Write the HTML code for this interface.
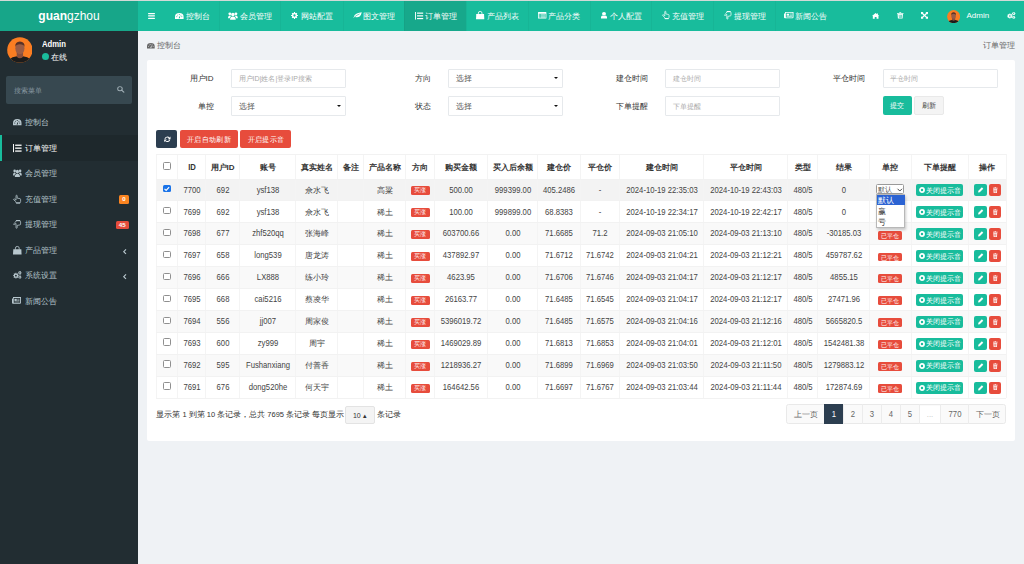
<!DOCTYPE html><html><head><meta charset="utf-8"><style>
*{box-sizing:border-box;margin:0;padding:0}
html,body{width:1024px;height:564px;overflow:hidden}
body{position:relative;background:#eff2f5;font-family:"Liberation Sans",sans-serif;font-size:8px;color:#333}
.a{position:absolute;white-space:nowrap}
.t{position:absolute;white-space:nowrap;line-height:12px;height:12px}
.ic{position:absolute;display:block;overflow:visible}
.cell{position:absolute;text-align:center;white-space:nowrap}
.vline{position:absolute;width:1px;background:#f4f4f4}
.hline{position:absolute;height:1px;background:#f2f2f2}
.inp{position:absolute;background:#fff;border:1px solid #e6e9ec;height:19.4px;width:115px;border-radius:1px}
.btn{position:absolute;color:#fff;text-align:center;border-radius:2px;white-space:nowrap}
.bdg{position:absolute;color:#fff;text-align:center;border-radius:1.5px;font-size:6px;white-space:nowrap}
</style></head><body>
<div class="a" style="left:0;top:0;width:1024px;height:1px;background:#d2dad7"></div>
<div class="a" style="left:0;top:1px;width:138px;height:30px;background:#17a689"></div>
<div class="t" style="left:-31.00px;width:200px;text-align:center;top:10.00px;font-size:12.00px;color:#fff;font-weight:normal;"><b>guan</b>gzhou</div>
<div class="a" style="left:138px;top:1px;width:886px;height:30px;background:#18bc9c"></div>
<div class="a" style="left:404.2px;top:1px;width:62px;height:30px;background:#17a88b"></div>
<div class="a" style="left:219.0px;top:1px;width:1px;height:30px;background:rgba(0,0,0,0.035)"></div>
<div class="a" style="left:280.0px;top:1px;width:1px;height:30px;background:rgba(0,0,0,0.035)"></div>
<div class="a" style="left:342.7px;top:1px;width:1px;height:30px;background:rgba(0,0,0,0.035)"></div>
<div class="a" style="left:404.2px;top:1px;width:1px;height:30px;background:rgba(0,0,0,0.035)"></div>
<div class="a" style="left:466.1px;top:1px;width:1px;height:30px;background:rgba(0,0,0,0.035)"></div>
<div class="a" style="left:527.8px;top:1px;width:1px;height:30px;background:rgba(0,0,0,0.035)"></div>
<div class="a" style="left:589.7px;top:1px;width:1px;height:30px;background:rgba(0,0,0,0.035)"></div>
<div class="a" style="left:651.4px;top:1px;width:1px;height:30px;background:rgba(0,0,0,0.035)"></div>
<div class="a" style="left:713.2px;top:1px;width:1px;height:30px;background:rgba(0,0,0,0.035)"></div>
<div class="a" style="left:775.0px;top:1px;width:1px;height:30px;background:rgba(0,0,0,0.035)"></div>
<div class="t" style="left:185.80px;top:11.00px;font-size:8.00px;color:#fff;font-weight:normal;">控制台</div>
<div class="t" style="left:239.70px;top:11.00px;font-size:8.00px;color:#fff;font-weight:normal;">会员管理</div>
<div class="t" style="left:301.10px;top:11.00px;font-size:8.00px;color:#fff;font-weight:normal;">网站配置</div>
<div class="t" style="left:363.00px;top:11.00px;font-size:8.00px;color:#fff;font-weight:normal;">图文管理</div>
<div class="t" style="left:425.10px;top:11.00px;font-size:8.00px;color:#fff;font-weight:normal;">订单管理</div>
<div class="t" style="left:486.60px;top:11.00px;font-size:8.00px;color:#fff;font-weight:normal;">产品列表</div>
<div class="t" style="left:548.30px;top:11.00px;font-size:8.00px;color:#fff;font-weight:normal;">产品分类</div>
<div class="t" style="left:610.20px;top:11.00px;font-size:8.00px;color:#fff;font-weight:normal;">个人配置</div>
<div class="t" style="left:672.40px;top:11.00px;font-size:8.00px;color:#fff;font-weight:normal;">充值管理</div>
<div class="t" style="left:734.20px;top:11.00px;font-size:8.00px;color:#fff;font-weight:normal;">提现管理</div>
<div class="t" style="left:795.40px;top:11.00px;font-size:8.00px;color:#fff;font-weight:normal;">新闻公告</div>
<div class="t" style="left:966.50px;top:10.00px;font-size:8.00px;color:#fff;font-weight:normal;">Admin</div>
<svg class="ic" style="left:148.20px;top:12.90px;width:7.00px;height:5.90px" viewBox="0 0 16 13" preserveAspectRatio="none" fill="#fff"><rect x="0" y="0" width="16" height="2.6" rx="1"/><rect x="0" y="5.2" width="16" height="2.6" rx="1"/><rect x="0" y="10.4" width="16" height="2.6" rx="1"/></svg>
<svg class="ic" style="left:174.70px;top:13.10px;width:8.60px;height:5.90px" viewBox="0 0 16 13" preserveAspectRatio="none" fill="#fff"><path fill-rule="evenodd" d="M0 13 L0 8 A8 8 0 0 1 16 8 L16 13 Z M2.2 8.2 a1.1 1.1 0 1 0 2.2 0 a1.1 1.1 0 1 0 -2.2 0 Z M11.6 8.2 a1.1 1.1 0 1 0 2.2 0 a1.1 1.1 0 1 0 -2.2 0 Z M6.9 3.2 a1.1 1.1 0 1 0 2.2 0 a1.1 1.1 0 1 0 -2.2 0 Z M3.8 4.6 a1 1 0 1 0 2 0 a1 1 0 1 0 -2 0 Z M10.2 4.6 a1 1 0 1 0 2 0 a1 1 0 1 0 -2 0 Z M6.6 11.5 L9.8 5 L9.2 11.5 Z"/></svg>
<svg class="ic" style="left:228.20px;top:11.70px;width:9.80px;height:7.70px" viewBox="0 0 18 14" preserveAspectRatio="none" fill="#fff"><circle cx="9" cy="4.6" r="3.2"/><path d="M3.8 14 Q3.8 8.2 9 8.2 Q14.2 8.2 14.2 14 Z"/><circle cx="3.4" cy="3.3" r="2.6"/><circle cx="14.6" cy="3.3" r="2.6"/><path d="M0 11.5 Q0 6.2 3.4 6.2 Q5.2 6.2 6 7.4 Q3.2 9 3.2 11.5 Z"/><path d="M18 11.5 Q18 6.2 14.6 6.2 Q12.8 6.2 12 7.4 Q14.8 9 14.8 11.5 Z"/></svg>
<svg class="ic" style="left:291.30px;top:12.20px;width:7.00px;height:7.00px" viewBox="0 0 16 16" preserveAspectRatio="none" fill="#fff"><path fill-rule="evenodd" d="M13.64 5.95 L13.86 6.71 L15.88 6.62 L15.88 9.38 L13.86 9.29 L13.44 10.53 L13.05 11.23 L14.55 12.60 L12.60 14.55 L11.23 13.05 L10.05 13.64 L9.29 13.86 L9.38 15.88 L6.62 15.88 L6.71 13.86 L5.47 13.44 L4.77 13.05 L3.40 14.55 L1.45 12.60 L2.95 11.23 L2.36 10.05 L2.14 9.29 L0.12 9.38 L0.12 6.62 L2.14 6.71 L2.56 5.47 L2.95 4.77 L1.45 3.40 L3.40 1.45 L4.77 2.95 L5.95 2.36 L6.71 2.14 L6.62 0.12 L9.38 0.12 L9.29 2.14 L10.53 2.56 L11.23 2.95 L12.60 1.45 L14.55 3.40 L13.05 4.77 Z M10.60 8.00 A2.6 2.6 0 1 0 5.40 8.00 A2.6 2.6 0 1 0 10.60 8.00 Z"/></svg>
<svg class="ic" style="left:352.50px;top:12.30px;width:8.80px;height:5.90px" viewBox="0 0 16 12" preserveAspectRatio="none" fill="#fff"><path d="M1 11.5 Q2 5 7 3 Q11 1.5 16 0.5 Q15 6 12 9 Q8 12 3 9.5 Q2 10.5 1.8 12 Z"/><path d="M3 10 Q7 6 12 4" stroke="#18bc9c" stroke-width="1.2" fill="none"/></svg>
<svg class="ic" style="left:414.60px;top:11.80px;width:8.20px;height:7.60px" viewBox="0 0 16 14" preserveAspectRatio="none" fill="#fff"><rect x="0" y="0" width="1.8" height="14"/><rect x="4" y="1" width="12" height="2.2"/><rect x="4" y="6" width="12" height="2.2"/><rect x="4" y="11" width="12" height="2.2"/></svg>
<svg class="ic" style="left:476.00px;top:11.30px;width:8.30px;height:8.20px" viewBox="0 0 16 16" preserveAspectRatio="none" fill="#fff"><path fill-rule="evenodd" d="M0.5 6 L15.5 6 L16 16 L0 16 Z"/><path d="M4.5 7 L4.5 4 Q4.5 0.8 8 0.8 Q11.5 0.8 11.5 4 L11.5 7" stroke-width="1.6" fill="none" stroke="#fff"/></svg>
<svg class="ic" style="left:538.00px;top:12.00px;width:8.40px;height:6.50px" viewBox="0 0 16 13" preserveAspectRatio="none" fill="#fff"><path fill-rule="evenodd" d="M0 1 Q0 0 1 0 L15 0 Q16 0 16 1 L16 12 Q16 13 15 13 L1 13 Q0 13 0 12 Z M1.5 3.5 L14.5 3.5 L14.5 11.5 L1.5 11.5 Z"/><rect x="2.5" y="5" width="2" height="1.5"/><rect x="2.5" y="7.5" width="2" height="1.5"/><rect x="2.5" y="10" width="2" height="1"/><rect x="5.5" y="5" width="8" height="1.5"/><rect x="5.5" y="7.5" width="8" height="1.5"/><rect x="5.5" y="10" width="8" height="1"/></svg>
<svg class="ic" style="left:601.00px;top:12.30px;width:6.00px;height:6.60px" viewBox="0 0 12 16" preserveAspectRatio="none" fill="#fff"><circle cx="6" cy="4.2" r="4"/><path d="M0 16 L0 13 Q0 8.5 3.5 8.5 Q6 10.3 8.5 8.5 Q12 8.5 12 13 L12 16 Z"/></svg>
<svg class="ic" style="left:661.80px;top:11.00px;width:7.40px;height:8.20px" viewBox="0 0 14 16" preserveAspectRatio="none" fill="#fff"><path d="M5.3 1.5 Q5.3 0.5 6.3 0.5 Q7.3 0.5 7.3 1.5 L7.3 5.8 L12.2 6.8 Q13.3 7 13.3 8.2 L13.3 12.4 L12.4 14.6 L5.5 14.6 L4.6 12.2 L1.2 8.8 Q0.6 8 1.4 7.5 Q2.2 7.1 3 7.8 L5.3 9.6 Z" fill="none" stroke-width="1.4" stroke-linejoin="round" stroke="#fff"/><path d="M5.4 15 L12.4 15" stroke-width="1.8" stroke="#fff"/></svg>
<svg class="ic" style="left:723.70px;top:11.20px;width:7.40px;height:8.40px" viewBox="0 0 14 16" preserveAspectRatio="none" fill="#fff"><path d="M5.3 14.5 Q5.3 15.5 6.3 15.5 Q7.3 15.5 7.3 14.5 L7.3 10.2 L12.2 9.2 Q13.3 9 13.3 7.8 L13.3 3.6 L12.4 1.4 L5.5 1.4 L4.6 3.8 L1.2 7.2 Q0.6 8 1.4 8.5 Q2.2 8.9 3 8.2 L5.3 6.4 Z" fill="none" stroke-width="1.4" stroke-linejoin="round" stroke="#fff"/><path d="M5.4 1 L12.4 1" stroke-width="1.8" stroke="#fff"/></svg>
<svg class="ic" style="left:784.40px;top:12.20px;width:9.50px;height:6.30px" viewBox="0 0 18 13" preserveAspectRatio="none" fill="#fff"><path fill-rule="evenodd" d="M2 0 L18 0 L18 11 Q18 13 16 13 L2 13 Q0 13 0 11 L0 3 L2 3 Z M3.5 1.8 L16.2 1.8 L16.2 11.2 L3.5 11.2 Z"/><rect x="5" y="3.5" width="4.5" height="4"/><rect x="10.5" y="3.5" width="4.5" height="1.2"/><rect x="10.5" y="6" width="4.5" height="1.2"/><rect x="5" y="8.8" width="10" height="1.2"/></svg>
<svg class="ic" style="left:871.50px;top:12.50px;width:7.30px;height:5.80px" viewBox="0 0 16 13" preserveAspectRatio="none" fill="#fff"><path d="M8 0 L16 6.5 L14.2 6.5 L14.2 13 L10 13 L10 9 L6 9 L6 13 L1.8 13 L1.8 6.5 L0 6.5 Z"/><rect x="11.2" y="1" width="2" height="4"/></svg>
<svg class="ic" style="left:897.00px;top:12.40px;width:6.50px;height:6.60px" viewBox="0 0 12 16" preserveAspectRatio="none" fill="#fff"><path fill-rule="evenodd" d="M0 2.2 L4 2.2 L4.5 0.5 L7.5 0.5 L8 2.2 L12 2.2 L12 4 L0 4 Z M1 5 L11 5 L10.3 16 L1.7 16 Z M3.2 6.5 L3.7 14.5 L4.7 14.5 L4.4 6.5 Z M5.5 6.5 L5.5 14.5 L6.5 14.5 L6.5 6.5 Z M7.6 6.5 L7.3 14.5 L8.3 14.5 L8.8 6.5 Z"/></svg>
<svg class="ic" style="left:921.00px;top:12.20px;width:7.00px;height:6.80px" viewBox="0 0 16 16" preserveAspectRatio="none" fill="#fff"><path d="M0 0 L6 0 L4 2 L8 6 L12 2 L10 0 L16 0 L16 6 L14 4 L10 8 L14 12 L16 10 L16 16 L10 16 L12 14 L8 10 L4 14 L6 16 L0 16 L0 10 L2 12 L6 8 L2 4 L0 6 Z"/></svg>
<svg class="ic" style="left:1007.00px;top:12.20px;width:8.60px;height:6.80px" viewBox="0 0 18 16" preserveAspectRatio="none" fill="#fff"><path fill-rule="evenodd" d="M10.13 7.99 L10.30 8.56 L11.91 8.47 L11.91 10.53 L10.30 10.44 L9.99 11.36 L9.71 11.87 L10.91 12.95 L9.45 14.41 L8.37 13.21 L7.51 13.63 L6.94 13.80 L7.03 15.41 L4.97 15.41 L5.06 13.80 L4.14 13.49 L3.63 13.21 L2.55 14.41 L1.09 12.95 L2.29 11.87 L1.87 11.01 L1.70 10.44 L0.09 10.53 L0.09 8.47 L1.70 8.56 L2.01 7.64 L2.29 7.13 L1.09 6.05 L2.55 4.59 L3.63 5.79 L4.49 5.37 L5.06 5.20 L4.97 3.59 L7.03 3.59 L6.94 5.20 L7.86 5.51 L8.37 5.79 L9.45 4.59 L10.91 6.05 L9.71 7.13 Z M7.90 9.50 A1.9 1.9 0 1 0 4.10 9.50 A1.9 1.9 0 1 0 7.90 9.50 Z"/><path fill-rule="evenodd" d="M16.50 2.54 L16.68 3.00 L17.70 2.93 L17.70 4.67 L16.68 4.60 L16.34 5.34 L16.03 5.73 L16.60 6.57 L15.10 7.44 L14.65 6.52 L13.84 6.60 L13.35 6.52 L12.90 7.44 L11.40 6.57 L11.97 5.73 L11.50 5.06 L11.32 4.60 L10.30 4.67 L10.30 2.93 L11.32 3.00 L11.66 2.26 L11.97 1.87 L11.40 1.03 L12.90 0.16 L13.35 1.08 L14.16 1.00 L14.65 1.08 L15.10 0.16 L16.60 1.03 L16.03 1.87 Z M15.20 3.80 A1.2 1.2 0 1 0 12.80 3.80 A1.2 1.2 0 1 0 15.20 3.80 Z"/><path fill-rule="evenodd" d="M16.32 11.33 L16.49 11.76 L17.41 11.70 L17.41 13.30 L16.49 13.24 L16.17 13.93 L15.89 14.29 L16.40 15.05 L15.01 15.85 L14.61 15.03 L13.85 15.10 L13.39 15.03 L12.99 15.85 L11.60 15.05 L12.11 14.29 L11.68 13.67 L11.51 13.24 L10.59 13.30 L10.59 11.70 L11.51 11.76 L11.83 11.07 L12.11 10.71 L11.60 9.95 L12.99 9.15 L13.39 9.97 L14.15 9.90 L14.61 9.97 L15.01 9.15 L16.40 9.95 L15.89 10.71 Z M15.10 12.50 A1.1 1.1 0 1 0 12.90 12.50 A1.1 1.1 0 1 0 15.10 12.50 Z"/></svg>
<div class="a" style="left:946.60px;top:9.90px;width:13.2px;height:13.2px"><svg style="width:13.2px;height:13.2px;display:block" viewBox="0 0 26 26"><defs><clipPath id="av2"><circle cx="13" cy="13" r="12.8"/></clipPath></defs><circle cx="13" cy="13" r="12.8" fill="#fb7d22"/><g clip-path="url(#av2)"><path d="M1 27 L2.5 22.5 Q5 20 10 19.5 L16 19.5 Q21 20 23.5 22.5 L25 27 Z" fill="#1c1c1c"/><path d="M9.8 14 L16.2 14 L16.2 19.8 Q13 23 9.8 19.8 Z" fill="#8a4f3c"/><ellipse cx="13" cy="11.4" rx="4.6" ry="6" fill="#9b5c46"/><path d="M8.3 10 Q8 4.8 13 4.6 Q18 4.8 17.7 10 Q17 7.5 13 7.3 Q9 7.5 8.3 10 Z" fill="#5a3126"/></g></svg></div>
<div class="a" style="left:0;top:31px;width:138px;height:533px;background:#222d32"></div>
<div class="a" style="left:6px;top:75.8px;width:126.2px;height:28px;background:#374850;border-radius:2px"></div>
<div class="t" style="left:13.80px;top:84.60px;font-size:7.00px;color:#8797a0;font-weight:normal;">搜索菜单</div>
<div class="t" style="left:42.00px;top:37.60px;font-size:9.28px;color:#fff;font-weight:bold;transform:scaleX(0.83);transform-origin:left center;">Admin</div>
<div class="a" style="left:42px;top:53.4px;width:7px;height:7px;border-radius:50%;background:#1abc9c"></div>
<div class="t" style="left:50.60px;top:52.00px;font-size:8.00px;color:#fff;font-weight:normal;">在线</div>
<div class="a" style="left:0;top:135px;width:138px;height:25.8px;background:#1e282c"></div>
<div class="a" style="left:0;top:135px;width:2px;height:25.8px;background:#18bc9c"></div>
<div class="t" style="left:25.00px;top:117.20px;font-size:8.00px;color:#b8c7ce;font-weight:normal;">控制台</div>
<div class="t" style="left:25.00px;top:142.70px;font-size:8.00px;color:#fff;font-weight:normal;">订单管理</div>
<div class="t" style="left:25.00px;top:168.20px;font-size:8.00px;color:#b8c7ce;font-weight:normal;">会员管理</div>
<div class="t" style="left:25.00px;top:193.90px;font-size:8.00px;color:#b8c7ce;font-weight:normal;">充值管理</div>
<div class="t" style="left:25.00px;top:219.40px;font-size:8.00px;color:#b8c7ce;font-weight:normal;">提现管理</div>
<div class="t" style="left:25.00px;top:245.20px;font-size:8.00px;color:#b8c7ce;font-weight:normal;">产品管理</div>
<div class="t" style="left:25.00px;top:270.30px;font-size:8.00px;color:#b8c7ce;font-weight:normal;">系统设置</div>
<div class="t" style="left:25.00px;top:295.90px;font-size:8.00px;color:#b8c7ce;font-weight:normal;">新闻公告</div>
<div class="bdg" style="left:118.9px;top:195px;width:10.1px;height:8.8px;line-height:8.4px;background:#fb8421;font-weight:bold;font-size:6.2px">0</div>
<div class="bdg" style="left:115.6px;top:220.5px;width:13.4px;height:8.8px;line-height:8.4px;background:#e74c3c;font-weight:bold;font-size:6.2px">45</div>
<div class="a" style="left:6.60px;top:36.90px;width:25.8px;height:25.8px"><svg style="width:25.8px;height:25.8px;display:block" viewBox="0 0 26 26"><defs><clipPath id="av1"><circle cx="13" cy="13" r="12.8"/></clipPath></defs><circle cx="13" cy="13" r="12.8" fill="#fb7d22"/><g clip-path="url(#av1)"><path d="M1 27 L2.5 22.5 Q5 20 10 19.5 L16 19.5 Q21 20 23.5 22.5 L25 27 Z" fill="#1c1c1c"/><path d="M9.8 14 L16.2 14 L16.2 19.8 Q13 23 9.8 19.8 Z" fill="#8a4f3c"/><ellipse cx="13" cy="11.4" rx="4.6" ry="6" fill="#9b5c46"/><path d="M8.3 10 Q8 4.8 13 4.6 Q18 4.8 17.7 10 Q17 7.5 13 7.3 Q9 7.5 8.3 10 Z" fill="#5a3126"/></g></svg></div>
<svg class="ic" style="left:117.00px;top:86.30px;width:7.30px;height:6.60px" viewBox="0 0 16 16" preserveAspectRatio="none" fill="#a0aeb5"><circle cx="6.5" cy="6.5" r="5" fill="none" stroke-width="2.2" stroke="#a0aeb5"/><path d="M10 10 L15 15" stroke-width="2.6" stroke-linecap="round" stroke="#a0aeb5"/></svg>
<svg class="ic" style="left:12.50px;top:119.30px;width:8.50px;height:6.30px" viewBox="0 0 16 13" preserveAspectRatio="none" fill="#b8c7ce"><path fill-rule="evenodd" d="M0 13 L0 8 A8 8 0 0 1 16 8 L16 13 Z M2.2 8.2 a1.1 1.1 0 1 0 2.2 0 a1.1 1.1 0 1 0 -2.2 0 Z M11.6 8.2 a1.1 1.1 0 1 0 2.2 0 a1.1 1.1 0 1 0 -2.2 0 Z M6.9 3.2 a1.1 1.1 0 1 0 2.2 0 a1.1 1.1 0 1 0 -2.2 0 Z M3.8 4.6 a1 1 0 1 0 2 0 a1 1 0 1 0 -2 0 Z M10.2 4.6 a1 1 0 1 0 2 0 a1 1 0 1 0 -2 0 Z M6.6 11.5 L9.8 5 L9.2 11.5 Z"/></svg>
<svg class="ic" style="left:12.70px;top:143.60px;width:8.60px;height:8.20px" viewBox="0 0 16 14" preserveAspectRatio="none" fill="#fff"><rect x="0" y="0" width="1.8" height="14"/><rect x="4" y="1" width="12" height="2.2"/><rect x="4" y="6" width="12" height="2.2"/><rect x="4" y="11" width="12" height="2.2"/></svg>
<svg class="ic" style="left:12.50px;top:169.20px;width:8.80px;height:8.00px" viewBox="0 0 18 14" preserveAspectRatio="none" fill="#b8c7ce"><circle cx="9" cy="4.6" r="3.2"/><path d="M3.8 14 Q3.8 8.2 9 8.2 Q14.2 8.2 14.2 14 Z"/><circle cx="3.4" cy="3.3" r="2.6"/><circle cx="14.6" cy="3.3" r="2.6"/><path d="M0 11.5 Q0 6.2 3.4 6.2 Q5.2 6.2 6 7.4 Q3.2 9 3.2 11.5 Z"/><path d="M18 11.5 Q18 6.2 14.6 6.2 Q12.8 6.2 12 7.4 Q14.8 9 14.8 11.5 Z"/></svg>
<svg class="ic" style="left:13.00px;top:194.60px;width:8.00px;height:8.60px" viewBox="0 0 14 16" preserveAspectRatio="none" fill="#b8c7ce"><path d="M5.3 1.5 Q5.3 0.5 6.3 0.5 Q7.3 0.5 7.3 1.5 L7.3 5.8 L12.2 6.8 Q13.3 7 13.3 8.2 L13.3 12.4 L12.4 14.6 L5.5 14.6 L4.6 12.2 L1.2 8.8 Q0.6 8 1.4 7.5 Q2.2 7.1 3 7.8 L5.3 9.6 Z" fill="none" stroke-width="1.4" stroke-linejoin="round" stroke="#b8c7ce"/><path d="M5.4 15 L12.4 15" stroke-width="1.8" stroke="#b8c7ce"/></svg>
<svg class="ic" style="left:13.00px;top:219.80px;width:8.00px;height:8.50px" viewBox="0 0 14 16" preserveAspectRatio="none" fill="#b8c7ce"><path d="M5.3 14.5 Q5.3 15.5 6.3 15.5 Q7.3 15.5 7.3 14.5 L7.3 10.2 L12.2 9.2 Q13.3 9 13.3 7.8 L13.3 3.6 L12.4 1.4 L5.5 1.4 L4.6 3.8 L1.2 7.2 Q0.6 8 1.4 8.5 Q2.2 8.9 3 8.2 L5.3 6.4 Z" fill="none" stroke-width="1.4" stroke-linejoin="round" stroke="#b8c7ce"/><path d="M5.4 1 L12.4 1" stroke-width="1.8" stroke="#b8c7ce"/></svg>
<svg class="ic" style="left:12.60px;top:245.50px;width:8.60px;height:8.50px" viewBox="0 0 16 16" preserveAspectRatio="none" fill="#b8c7ce"><path fill-rule="evenodd" d="M0.5 6 L15.5 6 L16 16 L0 16 Z"/><path d="M4.5 7 L4.5 4 Q4.5 0.8 8 0.8 Q11.5 0.8 11.5 4 L11.5 7" stroke-width="1.6" fill="none" stroke="#b8c7ce"/></svg>
<svg class="ic" style="left:12.50px;top:271.30px;width:8.80px;height:7.80px" viewBox="0 0 18 16" preserveAspectRatio="none" fill="#b8c7ce"><path fill-rule="evenodd" d="M10.13 7.99 L10.30 8.56 L11.91 8.47 L11.91 10.53 L10.30 10.44 L9.99 11.36 L9.71 11.87 L10.91 12.95 L9.45 14.41 L8.37 13.21 L7.51 13.63 L6.94 13.80 L7.03 15.41 L4.97 15.41 L5.06 13.80 L4.14 13.49 L3.63 13.21 L2.55 14.41 L1.09 12.95 L2.29 11.87 L1.87 11.01 L1.70 10.44 L0.09 10.53 L0.09 8.47 L1.70 8.56 L2.01 7.64 L2.29 7.13 L1.09 6.05 L2.55 4.59 L3.63 5.79 L4.49 5.37 L5.06 5.20 L4.97 3.59 L7.03 3.59 L6.94 5.20 L7.86 5.51 L8.37 5.79 L9.45 4.59 L10.91 6.05 L9.71 7.13 Z M7.90 9.50 A1.9 1.9 0 1 0 4.10 9.50 A1.9 1.9 0 1 0 7.90 9.50 Z"/><path fill-rule="evenodd" d="M16.50 2.54 L16.68 3.00 L17.70 2.93 L17.70 4.67 L16.68 4.60 L16.34 5.34 L16.03 5.73 L16.60 6.57 L15.10 7.44 L14.65 6.52 L13.84 6.60 L13.35 6.52 L12.90 7.44 L11.40 6.57 L11.97 5.73 L11.50 5.06 L11.32 4.60 L10.30 4.67 L10.30 2.93 L11.32 3.00 L11.66 2.26 L11.97 1.87 L11.40 1.03 L12.90 0.16 L13.35 1.08 L14.16 1.00 L14.65 1.08 L15.10 0.16 L16.60 1.03 L16.03 1.87 Z M15.20 3.80 A1.2 1.2 0 1 0 12.80 3.80 A1.2 1.2 0 1 0 15.20 3.80 Z"/><path fill-rule="evenodd" d="M16.32 11.33 L16.49 11.76 L17.41 11.70 L17.41 13.30 L16.49 13.24 L16.17 13.93 L15.89 14.29 L16.40 15.05 L15.01 15.85 L14.61 15.03 L13.85 15.10 L13.39 15.03 L12.99 15.85 L11.60 15.05 L12.11 14.29 L11.68 13.67 L11.51 13.24 L10.59 13.30 L10.59 11.70 L11.51 11.76 L11.83 11.07 L12.11 10.71 L11.60 9.95 L12.99 9.15 L13.39 9.97 L14.15 9.90 L14.61 9.97 L15.01 9.15 L16.40 9.95 L15.89 10.71 Z M15.10 12.50 A1.1 1.1 0 1 0 12.90 12.50 A1.1 1.1 0 1 0 15.10 12.50 Z"/></svg>
<svg class="ic" style="left:12.20px;top:297.30px;width:9.00px;height:6.80px" viewBox="0 0 18 13" preserveAspectRatio="none" fill="#b8c7ce"><path fill-rule="evenodd" d="M2 0 L18 0 L18 11 Q18 13 16 13 L2 13 Q0 13 0 11 L0 3 L2 3 Z M3.5 1.8 L16.2 1.8 L16.2 11.2 L3.5 11.2 Z"/><rect x="5" y="3.5" width="4.5" height="4"/><rect x="10.5" y="3.5" width="4.5" height="1.2"/><rect x="10.5" y="6" width="4.5" height="1.2"/><rect x="5" y="8.8" width="10" height="1.2"/></svg>
<svg class="ic" style="left:122.70px;top:249.20px;width:3.60px;height:5.40px" viewBox="0 0 6 10" preserveAspectRatio="none" fill="#b8c7ce"><path d="M5 0.8 L1.2 5 L5 9.2" fill="none" stroke-width="1.9" stroke="#b8c7ce"/></svg>
<svg class="ic" style="left:122.70px;top:274.30px;width:3.60px;height:5.40px" viewBox="0 0 6 10" preserveAspectRatio="none" fill="#b8c7ce"><path d="M5 0.8 L1.2 5 L5 9.2" fill="none" stroke-width="1.9" stroke="#b8c7ce"/></svg>
<svg class="ic" style="left:146.90px;top:42.90px;width:7.70px;height:5.40px" viewBox="0 0 16 13" preserveAspectRatio="none" fill="#666"><path fill-rule="evenodd" d="M0 13 L0 8 A8 8 0 0 1 16 8 L16 13 Z M2.2 8.2 a1.1 1.1 0 1 0 2.2 0 a1.1 1.1 0 1 0 -2.2 0 Z M11.6 8.2 a1.1 1.1 0 1 0 2.2 0 a1.1 1.1 0 1 0 -2.2 0 Z M6.9 3.2 a1.1 1.1 0 1 0 2.2 0 a1.1 1.1 0 1 0 -2.2 0 Z M3.8 4.6 a1 1 0 1 0 2 0 a1 1 0 1 0 -2 0 Z M10.2 4.6 a1 1 0 1 0 2 0 a1 1 0 1 0 -2 0 Z M6.6 11.5 L9.8 5 L9.2 11.5 Z"/></svg>
<div class="t" style="left:157.20px;top:40.30px;font-size:8.00px;color:#666;font-weight:normal;">控制台</div>
<div class="t" style="right:9.00px;top:40.30px;font-size:8.00px;color:#666;font-weight:normal;">订单管理</div>
<div class="a" style="left:147px;top:60px;width:868px;height:381px;background:#fff;border-radius:2px"></div>
<div class="t" style="right:810.50px;top:73.40px;font-size:8.00px;color:#333;font-weight:normal;">用户ID</div>
<div class="t" style="right:810.50px;top:100.50px;font-size:8.00px;color:#333;font-weight:normal;">单控</div>
<div class="t" style="right:593.50px;top:73.40px;font-size:8.00px;color:#333;font-weight:normal;">方向</div>
<div class="t" style="right:593.50px;top:100.50px;font-size:8.00px;color:#333;font-weight:normal;">状态</div>
<div class="t" style="right:376.00px;top:73.40px;font-size:8.00px;color:#333;font-weight:normal;">建仓时间</div>
<div class="t" style="right:376.00px;top:100.50px;font-size:8.00px;color:#333;font-weight:normal;">下单提醒</div>
<div class="t" style="right:159.00px;top:73.40px;font-size:8.00px;color:#333;font-weight:normal;">平仓时间</div>
<div class="inp" style="left:231.1px;top:68.5px"></div>
<div class="t" style="left:238.60px;top:73.00px;font-size:7.00px;color:#aaa;font-weight:normal;">用户ID|姓名|登录IP搜索</div>
<div class="inp" style="left:231.1px;top:96.3px"></div>
<div class="t" style="left:239.10px;top:100.60px;font-size:8.00px;color:#555;font-weight:normal;">选择</div>
<div class="a" style="left:336.7px;top:104.6px;width:0;height:0;border-left:2.3px solid transparent;border-right:2.3px solid transparent;border-top:2.7px solid #111"></div>
<div class="inp" style="left:448px;top:68.5px"></div>
<div class="t" style="left:456.00px;top:72.80px;font-size:8.00px;color:#555;font-weight:normal;">选择</div>
<div class="a" style="left:553.6px;top:76.8px;width:0;height:0;border-left:2.3px solid transparent;border-right:2.3px solid transparent;border-top:2.7px solid #111"></div>
<div class="inp" style="left:448px;top:96.3px"></div>
<div class="t" style="left:456.00px;top:100.60px;font-size:8.00px;color:#555;font-weight:normal;">选择</div>
<div class="a" style="left:553.6px;top:104.6px;width:0;height:0;border-left:2.3px solid transparent;border-right:2.3px solid transparent;border-top:2.7px solid #111"></div>
<div class="inp" style="left:665.4px;top:68.5px"></div>
<div class="t" style="left:672.90px;top:73.00px;font-size:7.00px;color:#aaa;font-weight:normal;">建仓时间</div>
<div class="inp" style="left:665.4px;top:96.3px"></div>
<div class="t" style="left:672.90px;top:100.80px;font-size:7.00px;color:#aaa;font-weight:normal;">下单提醒</div>
<div class="inp" style="left:882.7px;top:68.5px"></div>
<div class="t" style="left:890.20px;top:73.00px;font-size:7.00px;color:#aaa;font-weight:normal;">平仓时间</div>
<div class="btn" style="left:882.7px;top:96.3px;width:29.3px;height:18.7px;line-height:20px;background:#18bc9c;font-size:7px">提交</div>
<div class="btn" style="left:914px;top:96.3px;width:29.8px;height:18.7px;line-height:18.5px;background:#f4f4f4;border:1px solid #e9e9e9;color:#444;font-size:7px">刷新</div>
<div class="btn" style="left:155.9px;top:130.2px;width:21.1px;height:18px;background:#2c3e50"></div>
<svg class="ic" style="left:163.50px;top:136.00px;width:6.70px;height:6.60px" viewBox="0 0 16 16" preserveAspectRatio="none" fill="#fff"><path d="M2.2 7.2 A6 6 0 0 1 12.6 4.6" fill="none" stroke-width="2.4" stroke="#fff"/><path d="M15.6 1.2 L15.6 7.8 L9 7.8 Z"/><path d="M13.8 8.8 A6 6 0 0 1 3.4 11.4" fill="none" stroke-width="2.4" stroke="#fff"/><path d="M0.4 14.8 L0.4 8.2 L7 8.2 Z"/></svg>
<div class="btn" style="left:179.7px;top:130.2px;width:58.1px;height:18px;background:#e74c3c"></div>
<div class="t" style="left:108.75px;width:200px;text-align:center;top:134.20px;font-size:8.00px;color:#fff;font-weight:normal;transform:scale(0.925);transform-origin:center center;">开启自动刷新</div>
<div class="btn" style="left:240.1px;top:130.2px;width:50.9px;height:18px;background:#e74c3c"></div>
<div class="t" style="left:165.55px;width:200px;text-align:center;top:134.20px;font-size:8.00px;color:#fff;font-weight:normal;transform:scale(0.925);transform-origin:center center;">开启提示音</div>
<div class="a" style="left:156px;top:179.00px;width:850px;height:21.93px;background:#f3f3f3"></div>
<div class="a" style="left:156px;top:200.93px;width:850px;height:21.93px;background:#fff"></div>
<div class="a" style="left:156px;top:222.86px;width:850px;height:21.93px;background:#f9f9f9"></div>
<div class="a" style="left:156px;top:244.79px;width:850px;height:21.93px;background:#fff"></div>
<div class="a" style="left:156px;top:266.72px;width:850px;height:21.93px;background:#f9f9f9"></div>
<div class="a" style="left:156px;top:288.65px;width:850px;height:21.93px;background:#fff"></div>
<div class="a" style="left:156px;top:310.58px;width:850px;height:21.93px;background:#f9f9f9"></div>
<div class="a" style="left:156px;top:332.51px;width:850px;height:21.93px;background:#fff"></div>
<div class="a" style="left:156px;top:354.44px;width:850px;height:21.93px;background:#f9f9f9"></div>
<div class="a" style="left:156px;top:376.37px;width:850px;height:21.93px;background:#fff"></div>
<div class="vline" style="left:155.50px;top:153.9px;height:244.40px"></div>
<div class="vline" style="left:177.00px;top:153.9px;height:244.40px"></div>
<div class="vline" style="left:205.00px;top:153.9px;height:244.40px"></div>
<div class="vline" style="left:239.20px;top:153.9px;height:244.40px"></div>
<div class="vline" style="left:295.10px;top:153.9px;height:244.40px"></div>
<div class="vline" style="left:337.10px;top:153.9px;height:244.40px"></div>
<div class="vline" style="left:363.30px;top:153.9px;height:244.40px"></div>
<div class="vline" style="left:405.00px;top:153.9px;height:244.40px"></div>
<div class="vline" style="left:433.80px;top:153.9px;height:244.40px"></div>
<div class="vline" style="left:486.80px;top:153.9px;height:244.40px"></div>
<div class="vline" style="left:537.20px;top:153.9px;height:244.40px"></div>
<div class="vline" style="left:580.00px;top:153.9px;height:244.40px"></div>
<div class="vline" style="left:619.10px;top:153.9px;height:244.40px"></div>
<div class="vline" style="left:703.10px;top:153.9px;height:244.40px"></div>
<div class="vline" style="left:787.20px;top:153.9px;height:244.40px"></div>
<div class="vline" style="left:817.10px;top:153.9px;height:244.40px"></div>
<div class="vline" style="left:869.10px;top:153.9px;height:244.40px"></div>
<div class="vline" style="left:910.50px;top:153.9px;height:244.40px"></div>
<div class="vline" style="left:968.10px;top:153.9px;height:244.40px"></div>
<div class="vline" style="left:1005.50px;top:153.9px;height:244.40px"></div>
<div class="hline" style="left:156px;top:153.9px;width:850px"></div>
<div class="hline" style="left:156px;top:178.50px;width:850px"></div>
<div class="hline" style="left:156px;top:200.43px;width:850px"></div>
<div class="hline" style="left:156px;top:222.36px;width:850px"></div>
<div class="hline" style="left:156px;top:244.29px;width:850px"></div>
<div class="hline" style="left:156px;top:266.22px;width:850px"></div>
<div class="hline" style="left:156px;top:288.15px;width:850px"></div>
<div class="hline" style="left:156px;top:310.08px;width:850px"></div>
<div class="hline" style="left:156px;top:332.01px;width:850px"></div>
<div class="hline" style="left:156px;top:353.94px;width:850px"></div>
<div class="hline" style="left:156px;top:375.87px;width:850px"></div>
<div class="hline" style="left:156px;top:397.80px;width:850px"></div>
<div class="t" style="left:91.50px;width:200px;text-align:center;top:160.80px;font-size:9.28px;color:#333;font-weight:bold;transform:scaleX(0.83);transform-origin:center center;">ID</div>
<div class="t" style="left:122.60px;width:200px;text-align:center;top:161.80px;font-size:8.00px;color:#333;font-weight:bold;">用户ID</div>
<div class="t" style="left:167.65px;width:200px;text-align:center;top:161.80px;font-size:8.00px;color:#333;font-weight:bold;">账号</div>
<div class="t" style="left:216.60px;width:200px;text-align:center;top:161.80px;font-size:8.00px;color:#333;font-weight:bold;">真实姓名</div>
<div class="t" style="left:250.70px;width:200px;text-align:center;top:161.80px;font-size:8.00px;color:#333;font-weight:bold;">备注</div>
<div class="t" style="left:284.65px;width:200px;text-align:center;top:161.80px;font-size:8.00px;color:#333;font-weight:bold;">产品名称</div>
<div class="t" style="left:319.90px;width:200px;text-align:center;top:161.80px;font-size:8.00px;color:#333;font-weight:bold;">方向</div>
<div class="t" style="left:360.80px;width:200px;text-align:center;top:161.80px;font-size:8.00px;color:#333;font-weight:bold;">购买金额</div>
<div class="t" style="left:412.50px;width:200px;text-align:center;top:161.80px;font-size:8.00px;color:#333;font-weight:bold;">买入后余额</div>
<div class="t" style="left:459.10px;width:200px;text-align:center;top:161.80px;font-size:8.00px;color:#333;font-weight:bold;">建仓价</div>
<div class="t" style="left:500.05px;width:200px;text-align:center;top:161.80px;font-size:8.00px;color:#333;font-weight:bold;">平仓价</div>
<div class="t" style="left:561.60px;width:200px;text-align:center;top:161.80px;font-size:8.00px;color:#333;font-weight:bold;">建仓时间</div>
<div class="t" style="left:645.65px;width:200px;text-align:center;top:161.80px;font-size:8.00px;color:#333;font-weight:bold;">平仓时间</div>
<div class="t" style="left:702.65px;width:200px;text-align:center;top:161.80px;font-size:8.00px;color:#333;font-weight:bold;">类型</div>
<div class="t" style="left:743.60px;width:200px;text-align:center;top:161.80px;font-size:8.00px;color:#333;font-weight:bold;">结果</div>
<div class="t" style="left:790.30px;width:200px;text-align:center;top:161.80px;font-size:8.00px;color:#333;font-weight:bold;">单控</div>
<div class="t" style="left:839.80px;width:200px;text-align:center;top:161.80px;font-size:8.00px;color:#333;font-weight:bold;">下单提醒</div>
<div class="t" style="left:887.30px;width:200px;text-align:center;top:161.80px;font-size:8.00px;color:#333;font-weight:bold;">操作</div>
<div class="t" style="left:91.50px;width:200px;text-align:center;top:183.56px;font-size:9.28px;color:#444;font-weight:normal;transform:scaleX(0.83);transform-origin:center center;">7700</div>
<div class="t" style="left:122.60px;width:200px;text-align:center;top:183.56px;font-size:9.28px;color:#444;font-weight:normal;transform:scaleX(0.83);transform-origin:center center;">692</div>
<div class="t" style="left:167.65px;width:200px;text-align:center;top:183.56px;font-size:9.28px;color:#444;font-weight:normal;transform:scaleX(0.83);transform-origin:center center;">ysf138</div>
<div class="t" style="left:216.60px;width:200px;text-align:center;top:184.56px;font-size:8.00px;color:#444;font-weight:normal;">佘水飞</div>
<div class="t" style="left:284.65px;width:200px;text-align:center;top:184.56px;font-size:8.00px;color:#444;font-weight:normal;">高粱</div>
<div class="t" style="left:360.80px;width:200px;text-align:center;top:183.56px;font-size:9.28px;color:#444;font-weight:normal;transform:scaleX(0.83);transform-origin:center center;">500.00</div>
<div class="t" style="left:412.50px;width:200px;text-align:center;top:183.56px;font-size:9.28px;color:#444;font-weight:normal;transform:scaleX(0.83);transform-origin:center center;">999399.00</div>
<div class="t" style="left:459.10px;width:200px;text-align:center;top:183.56px;font-size:9.28px;color:#444;font-weight:normal;transform:scaleX(0.83);transform-origin:center center;">405.2486</div>
<div class="t" style="left:500.05px;width:200px;text-align:center;top:183.56px;font-size:9.28px;color:#444;font-weight:normal;transform:scaleX(0.83);transform-origin:center center;">-</div>
<div class="t" style="left:561.60px;width:200px;text-align:center;top:183.56px;font-size:9.28px;color:#444;font-weight:normal;transform:scaleX(0.83);transform-origin:center center;">2024-10-19 22:35:03</div>
<div class="t" style="left:645.65px;width:200px;text-align:center;top:183.56px;font-size:9.28px;color:#444;font-weight:normal;transform:scaleX(0.83);transform-origin:center center;">2024-10-19 22:43:03</div>
<div class="t" style="left:702.65px;width:200px;text-align:center;top:183.56px;font-size:9.28px;color:#444;font-weight:normal;transform:scaleX(0.83);transform-origin:center center;">480/5</div>
<div class="t" style="left:743.60px;width:200px;text-align:center;top:183.56px;font-size:9.28px;color:#444;font-weight:normal;transform:scaleX(0.83);transform-origin:center center;">0</div>
<div class="a" style="left:163.1px;top:184.97px;width:7.5px;height:7.5px;background:#1a73e8;border-radius:1.5px"></div>
<svg class="ic" style="left:163.1px;top:184.97px;width:7.5px;height:7.5px" viewBox="0 0 10 10"><path d="M2 5.2 L4.2 7.2 L8.2 2.8" fill="none" stroke="#fff" stroke-width="1.6"/></svg>
<div class="bdg" style="left:410.9px;top:186.26px;width:18.8px;height:9.1px;line-height:9.6px;background:#e74c3c;font-size:5.6px">买涨</div>
<div class="btn" style="left:915.8px;top:184.26px;width:47.3px;height:12.2px;background:#18bc9c"></div>
<div class="t" style="left:925.60px;top:184.87px;font-size:6.60px;color:#fff;font-weight:normal;">关闭提示音</div>
<svg class="ic" style="left:919.10px;top:187.37px;width:6.00px;height:6.00px" viewBox="0 0 16 16" preserveAspectRatio="none" fill="#fff"><circle cx="8" cy="8" r="5.5" fill="none" stroke-width="4.6" stroke="#fff"/></svg>
<div class="btn" style="left:974.2px;top:184.26px;width:12.5px;height:12.2px;background:#18bc9c"></div>
<div class="btn" style="left:989px;top:184.26px;width:11.9px;height:12.2px;background:#e74c3c"></div>
<svg class="ic" style="left:977.60px;top:187.16px;width:5.60px;height:5.60px" viewBox="0 0 16 16" preserveAspectRatio="none" fill="#fff"><path d="M11 1 L15 5 L5 15 L0.5 15.5 L1 11 Z"/></svg>
<svg class="ic" style="left:992.60px;top:187.06px;width:4.60px;height:6.00px" viewBox="0 0 12 16" preserveAspectRatio="none" fill="#fff"><path fill-rule="evenodd" d="M0 2.2 L4 2.2 L4.5 0.5 L7.5 0.5 L8 2.2 L12 2.2 L12 4 L0 4 Z M1 5 L11 5 L10.3 16 L1.7 16 Z M3.2 6.5 L3.7 14.5 L4.7 14.5 L4.4 6.5 Z M5.5 6.5 L5.5 14.5 L6.5 14.5 L6.5 6.5 Z M7.6 6.5 L7.3 14.5 L8.3 14.5 L8.8 6.5 Z"/></svg>
<div class="t" style="left:91.50px;width:200px;text-align:center;top:205.50px;font-size:9.28px;color:#444;font-weight:normal;transform:scaleX(0.83);transform-origin:center center;">7699</div>
<div class="t" style="left:122.60px;width:200px;text-align:center;top:205.50px;font-size:9.28px;color:#444;font-weight:normal;transform:scaleX(0.83);transform-origin:center center;">692</div>
<div class="t" style="left:167.65px;width:200px;text-align:center;top:205.50px;font-size:9.28px;color:#444;font-weight:normal;transform:scaleX(0.83);transform-origin:center center;">ysf138</div>
<div class="t" style="left:216.60px;width:200px;text-align:center;top:206.50px;font-size:8.00px;color:#444;font-weight:normal;">佘水飞</div>
<div class="t" style="left:284.65px;width:200px;text-align:center;top:206.50px;font-size:8.00px;color:#444;font-weight:normal;">稀土</div>
<div class="t" style="left:360.80px;width:200px;text-align:center;top:205.50px;font-size:9.28px;color:#444;font-weight:normal;transform:scaleX(0.83);transform-origin:center center;">100.00</div>
<div class="t" style="left:412.50px;width:200px;text-align:center;top:205.50px;font-size:9.28px;color:#444;font-weight:normal;transform:scaleX(0.83);transform-origin:center center;">999899.00</div>
<div class="t" style="left:459.10px;width:200px;text-align:center;top:205.50px;font-size:9.28px;color:#444;font-weight:normal;transform:scaleX(0.83);transform-origin:center center;">68.8383</div>
<div class="t" style="left:500.05px;width:200px;text-align:center;top:205.50px;font-size:9.28px;color:#444;font-weight:normal;transform:scaleX(0.83);transform-origin:center center;">-</div>
<div class="t" style="left:561.60px;width:200px;text-align:center;top:205.50px;font-size:9.28px;color:#444;font-weight:normal;transform:scaleX(0.83);transform-origin:center center;">2024-10-19 22:34:17</div>
<div class="t" style="left:645.65px;width:200px;text-align:center;top:205.50px;font-size:9.28px;color:#444;font-weight:normal;transform:scaleX(0.83);transform-origin:center center;">2024-10-19 22:42:17</div>
<div class="t" style="left:702.65px;width:200px;text-align:center;top:205.50px;font-size:9.28px;color:#444;font-weight:normal;transform:scaleX(0.83);transform-origin:center center;">480/5</div>
<div class="t" style="left:743.60px;width:200px;text-align:center;top:205.50px;font-size:9.28px;color:#444;font-weight:normal;transform:scaleX(0.83);transform-origin:center center;">0</div>
<div class="a" style="left:163.1px;top:206.90px;width:7.5px;height:7.5px;background:#fff;border:1px solid #8f8f8f;border-radius:1.5px"></div>
<div class="bdg" style="left:410.9px;top:208.19px;width:18.8px;height:9.1px;line-height:9.6px;background:#e74c3c;font-size:5.6px">买涨</div>
<div class="btn" style="left:915.8px;top:206.19px;width:47.3px;height:12.2px;background:#18bc9c"></div>
<div class="t" style="left:925.60px;top:206.80px;font-size:6.60px;color:#fff;font-weight:normal;">关闭提示音</div>
<svg class="ic" style="left:919.10px;top:209.30px;width:6.00px;height:6.00px" viewBox="0 0 16 16" preserveAspectRatio="none" fill="#fff"><circle cx="8" cy="8" r="5.5" fill="none" stroke-width="4.6" stroke="#fff"/></svg>
<div class="btn" style="left:974.2px;top:206.19px;width:12.5px;height:12.2px;background:#18bc9c"></div>
<div class="btn" style="left:989px;top:206.19px;width:11.9px;height:12.2px;background:#e74c3c"></div>
<svg class="ic" style="left:977.60px;top:209.09px;width:5.60px;height:5.60px" viewBox="0 0 16 16" preserveAspectRatio="none" fill="#fff"><path d="M11 1 L15 5 L5 15 L0.5 15.5 L1 11 Z"/></svg>
<svg class="ic" style="left:992.60px;top:209.00px;width:4.60px;height:6.00px" viewBox="0 0 12 16" preserveAspectRatio="none" fill="#fff"><path fill-rule="evenodd" d="M0 2.2 L4 2.2 L4.5 0.5 L7.5 0.5 L8 2.2 L12 2.2 L12 4 L0 4 Z M1 5 L11 5 L10.3 16 L1.7 16 Z M3.2 6.5 L3.7 14.5 L4.7 14.5 L4.4 6.5 Z M5.5 6.5 L5.5 14.5 L6.5 14.5 L6.5 6.5 Z M7.6 6.5 L7.3 14.5 L8.3 14.5 L8.8 6.5 Z"/></svg>
<div class="t" style="left:91.50px;width:200px;text-align:center;top:227.43px;font-size:9.28px;color:#444;font-weight:normal;transform:scaleX(0.83);transform-origin:center center;">7698</div>
<div class="t" style="left:122.60px;width:200px;text-align:center;top:227.43px;font-size:9.28px;color:#444;font-weight:normal;transform:scaleX(0.83);transform-origin:center center;">677</div>
<div class="t" style="left:167.65px;width:200px;text-align:center;top:227.43px;font-size:9.28px;color:#444;font-weight:normal;transform:scaleX(0.83);transform-origin:center center;">zhf520qq</div>
<div class="t" style="left:216.60px;width:200px;text-align:center;top:228.43px;font-size:8.00px;color:#444;font-weight:normal;">张海峰</div>
<div class="t" style="left:284.65px;width:200px;text-align:center;top:228.43px;font-size:8.00px;color:#444;font-weight:normal;">稀土</div>
<div class="t" style="left:360.80px;width:200px;text-align:center;top:227.43px;font-size:9.28px;color:#444;font-weight:normal;transform:scaleX(0.83);transform-origin:center center;">603700.66</div>
<div class="t" style="left:412.50px;width:200px;text-align:center;top:227.43px;font-size:9.28px;color:#444;font-weight:normal;transform:scaleX(0.83);transform-origin:center center;">0.00</div>
<div class="t" style="left:459.10px;width:200px;text-align:center;top:227.43px;font-size:9.28px;color:#444;font-weight:normal;transform:scaleX(0.83);transform-origin:center center;">71.6685</div>
<div class="t" style="left:500.05px;width:200px;text-align:center;top:227.43px;font-size:9.28px;color:#444;font-weight:normal;transform:scaleX(0.83);transform-origin:center center;">71.2</div>
<div class="t" style="left:561.60px;width:200px;text-align:center;top:227.43px;font-size:9.28px;color:#444;font-weight:normal;transform:scaleX(0.83);transform-origin:center center;">2024-09-03 21:05:10</div>
<div class="t" style="left:645.65px;width:200px;text-align:center;top:227.43px;font-size:9.28px;color:#444;font-weight:normal;transform:scaleX(0.83);transform-origin:center center;">2024-09-03 21:13:10</div>
<div class="t" style="left:702.65px;width:200px;text-align:center;top:227.43px;font-size:9.28px;color:#444;font-weight:normal;transform:scaleX(0.83);transform-origin:center center;">480/5</div>
<div class="t" style="left:743.60px;width:200px;text-align:center;top:227.43px;font-size:9.28px;color:#444;font-weight:normal;transform:scaleX(0.83);transform-origin:center center;">-30185.03</div>
<div class="a" style="left:163.1px;top:228.83px;width:7.5px;height:7.5px;background:#fff;border:1px solid #8f8f8f;border-radius:1.5px"></div>
<div class="bdg" style="left:410.9px;top:230.12px;width:18.8px;height:9.1px;line-height:9.6px;background:#e74c3c;font-size:5.6px">买涨</div>
<div class="bdg" style="left:878px;top:230.62px;width:24.4px;height:8.9px;line-height:9.3px;background:#e74c3c;font-size:6.2px">已平仓</div>
<div class="btn" style="left:915.8px;top:228.12px;width:47.3px;height:12.2px;background:#18bc9c"></div>
<div class="t" style="left:925.60px;top:228.73px;font-size:6.60px;color:#fff;font-weight:normal;">关闭提示音</div>
<svg class="ic" style="left:919.10px;top:231.23px;width:6.00px;height:6.00px" viewBox="0 0 16 16" preserveAspectRatio="none" fill="#fff"><circle cx="8" cy="8" r="5.5" fill="none" stroke-width="4.6" stroke="#fff"/></svg>
<div class="btn" style="left:974.2px;top:228.12px;width:12.5px;height:12.2px;background:#18bc9c"></div>
<div class="btn" style="left:989px;top:228.12px;width:11.9px;height:12.2px;background:#e74c3c"></div>
<svg class="ic" style="left:977.60px;top:231.03px;width:5.60px;height:5.60px" viewBox="0 0 16 16" preserveAspectRatio="none" fill="#fff"><path d="M11 1 L15 5 L5 15 L0.5 15.5 L1 11 Z"/></svg>
<svg class="ic" style="left:992.60px;top:230.93px;width:4.60px;height:6.00px" viewBox="0 0 12 16" preserveAspectRatio="none" fill="#fff"><path fill-rule="evenodd" d="M0 2.2 L4 2.2 L4.5 0.5 L7.5 0.5 L8 2.2 L12 2.2 L12 4 L0 4 Z M1 5 L11 5 L10.3 16 L1.7 16 Z M3.2 6.5 L3.7 14.5 L4.7 14.5 L4.4 6.5 Z M5.5 6.5 L5.5 14.5 L6.5 14.5 L6.5 6.5 Z M7.6 6.5 L7.3 14.5 L8.3 14.5 L8.8 6.5 Z"/></svg>
<div class="t" style="left:91.50px;width:200px;text-align:center;top:249.35px;font-size:9.28px;color:#444;font-weight:normal;transform:scaleX(0.83);transform-origin:center center;">7697</div>
<div class="t" style="left:122.60px;width:200px;text-align:center;top:249.35px;font-size:9.28px;color:#444;font-weight:normal;transform:scaleX(0.83);transform-origin:center center;">658</div>
<div class="t" style="left:167.65px;width:200px;text-align:center;top:249.35px;font-size:9.28px;color:#444;font-weight:normal;transform:scaleX(0.83);transform-origin:center center;">long539</div>
<div class="t" style="left:216.60px;width:200px;text-align:center;top:250.35px;font-size:8.00px;color:#444;font-weight:normal;">唐龙涛</div>
<div class="t" style="left:284.65px;width:200px;text-align:center;top:250.35px;font-size:8.00px;color:#444;font-weight:normal;">稀土</div>
<div class="t" style="left:360.80px;width:200px;text-align:center;top:249.35px;font-size:9.28px;color:#444;font-weight:normal;transform:scaleX(0.83);transform-origin:center center;">437892.97</div>
<div class="t" style="left:412.50px;width:200px;text-align:center;top:249.35px;font-size:9.28px;color:#444;font-weight:normal;transform:scaleX(0.83);transform-origin:center center;">0.00</div>
<div class="t" style="left:459.10px;width:200px;text-align:center;top:249.35px;font-size:9.28px;color:#444;font-weight:normal;transform:scaleX(0.83);transform-origin:center center;">71.6712</div>
<div class="t" style="left:500.05px;width:200px;text-align:center;top:249.35px;font-size:9.28px;color:#444;font-weight:normal;transform:scaleX(0.83);transform-origin:center center;">71.6742</div>
<div class="t" style="left:561.60px;width:200px;text-align:center;top:249.35px;font-size:9.28px;color:#444;font-weight:normal;transform:scaleX(0.83);transform-origin:center center;">2024-09-03 21:04:21</div>
<div class="t" style="left:645.65px;width:200px;text-align:center;top:249.35px;font-size:9.28px;color:#444;font-weight:normal;transform:scaleX(0.83);transform-origin:center center;">2024-09-03 21:12:21</div>
<div class="t" style="left:702.65px;width:200px;text-align:center;top:249.35px;font-size:9.28px;color:#444;font-weight:normal;transform:scaleX(0.83);transform-origin:center center;">480/5</div>
<div class="t" style="left:743.60px;width:200px;text-align:center;top:249.35px;font-size:9.28px;color:#444;font-weight:normal;transform:scaleX(0.83);transform-origin:center center;">459787.62</div>
<div class="a" style="left:163.1px;top:250.75px;width:7.5px;height:7.5px;background:#fff;border:1px solid #8f8f8f;border-radius:1.5px"></div>
<div class="bdg" style="left:410.9px;top:252.05px;width:18.8px;height:9.1px;line-height:9.6px;background:#e74c3c;font-size:5.6px">买涨</div>
<div class="bdg" style="left:878px;top:252.55px;width:24.4px;height:8.9px;line-height:9.3px;background:#e74c3c;font-size:6.2px">已平仓</div>
<div class="btn" style="left:915.8px;top:250.05px;width:47.3px;height:12.2px;background:#18bc9c"></div>
<div class="t" style="left:925.60px;top:250.66px;font-size:6.60px;color:#fff;font-weight:normal;">关闭提示音</div>
<svg class="ic" style="left:919.10px;top:253.16px;width:6.00px;height:6.00px" viewBox="0 0 16 16" preserveAspectRatio="none" fill="#fff"><circle cx="8" cy="8" r="5.5" fill="none" stroke-width="4.6" stroke="#fff"/></svg>
<div class="btn" style="left:974.2px;top:250.05px;width:12.5px;height:12.2px;background:#18bc9c"></div>
<div class="btn" style="left:989px;top:250.05px;width:11.9px;height:12.2px;background:#e74c3c"></div>
<svg class="ic" style="left:977.60px;top:252.95px;width:5.60px;height:5.60px" viewBox="0 0 16 16" preserveAspectRatio="none" fill="#fff"><path d="M11 1 L15 5 L5 15 L0.5 15.5 L1 11 Z"/></svg>
<svg class="ic" style="left:992.60px;top:252.85px;width:4.60px;height:6.00px" viewBox="0 0 12 16" preserveAspectRatio="none" fill="#fff"><path fill-rule="evenodd" d="M0 2.2 L4 2.2 L4.5 0.5 L7.5 0.5 L8 2.2 L12 2.2 L12 4 L0 4 Z M1 5 L11 5 L10.3 16 L1.7 16 Z M3.2 6.5 L3.7 14.5 L4.7 14.5 L4.4 6.5 Z M5.5 6.5 L5.5 14.5 L6.5 14.5 L6.5 6.5 Z M7.6 6.5 L7.3 14.5 L8.3 14.5 L8.8 6.5 Z"/></svg>
<div class="t" style="left:91.50px;width:200px;text-align:center;top:271.29px;font-size:9.28px;color:#444;font-weight:normal;transform:scaleX(0.83);transform-origin:center center;">7696</div>
<div class="t" style="left:122.60px;width:200px;text-align:center;top:271.29px;font-size:9.28px;color:#444;font-weight:normal;transform:scaleX(0.83);transform-origin:center center;">666</div>
<div class="t" style="left:167.65px;width:200px;text-align:center;top:271.29px;font-size:9.28px;color:#444;font-weight:normal;transform:scaleX(0.83);transform-origin:center center;">LX888</div>
<div class="t" style="left:216.60px;width:200px;text-align:center;top:272.29px;font-size:8.00px;color:#444;font-weight:normal;">练小玲</div>
<div class="t" style="left:284.65px;width:200px;text-align:center;top:272.29px;font-size:8.00px;color:#444;font-weight:normal;">稀土</div>
<div class="t" style="left:360.80px;width:200px;text-align:center;top:271.29px;font-size:9.28px;color:#444;font-weight:normal;transform:scaleX(0.83);transform-origin:center center;">4623.95</div>
<div class="t" style="left:412.50px;width:200px;text-align:center;top:271.29px;font-size:9.28px;color:#444;font-weight:normal;transform:scaleX(0.83);transform-origin:center center;">0.00</div>
<div class="t" style="left:459.10px;width:200px;text-align:center;top:271.29px;font-size:9.28px;color:#444;font-weight:normal;transform:scaleX(0.83);transform-origin:center center;">71.6706</div>
<div class="t" style="left:500.05px;width:200px;text-align:center;top:271.29px;font-size:9.28px;color:#444;font-weight:normal;transform:scaleX(0.83);transform-origin:center center;">71.6746</div>
<div class="t" style="left:561.60px;width:200px;text-align:center;top:271.29px;font-size:9.28px;color:#444;font-weight:normal;transform:scaleX(0.83);transform-origin:center center;">2024-09-03 21:04:17</div>
<div class="t" style="left:645.65px;width:200px;text-align:center;top:271.29px;font-size:9.28px;color:#444;font-weight:normal;transform:scaleX(0.83);transform-origin:center center;">2024-09-03 21:12:17</div>
<div class="t" style="left:702.65px;width:200px;text-align:center;top:271.29px;font-size:9.28px;color:#444;font-weight:normal;transform:scaleX(0.83);transform-origin:center center;">480/5</div>
<div class="t" style="left:743.60px;width:200px;text-align:center;top:271.29px;font-size:9.28px;color:#444;font-weight:normal;transform:scaleX(0.83);transform-origin:center center;">4855.15</div>
<div class="a" style="left:163.1px;top:272.69px;width:7.5px;height:7.5px;background:#fff;border:1px solid #8f8f8f;border-radius:1.5px"></div>
<div class="bdg" style="left:410.9px;top:273.99px;width:18.8px;height:9.1px;line-height:9.6px;background:#e74c3c;font-size:5.6px">买涨</div>
<div class="bdg" style="left:878px;top:274.49px;width:24.4px;height:8.9px;line-height:9.3px;background:#e74c3c;font-size:6.2px">已平仓</div>
<div class="btn" style="left:915.8px;top:271.99px;width:47.3px;height:12.2px;background:#18bc9c"></div>
<div class="t" style="left:925.60px;top:272.59px;font-size:6.60px;color:#fff;font-weight:normal;">关闭提示音</div>
<svg class="ic" style="left:919.10px;top:275.09px;width:6.00px;height:6.00px" viewBox="0 0 16 16" preserveAspectRatio="none" fill="#fff"><circle cx="8" cy="8" r="5.5" fill="none" stroke-width="4.6" stroke="#fff"/></svg>
<div class="btn" style="left:974.2px;top:271.99px;width:12.5px;height:12.2px;background:#18bc9c"></div>
<div class="btn" style="left:989px;top:271.99px;width:11.9px;height:12.2px;background:#e74c3c"></div>
<svg class="ic" style="left:977.60px;top:274.89px;width:5.60px;height:5.60px" viewBox="0 0 16 16" preserveAspectRatio="none" fill="#fff"><path d="M11 1 L15 5 L5 15 L0.5 15.5 L1 11 Z"/></svg>
<svg class="ic" style="left:992.60px;top:274.79px;width:4.60px;height:6.00px" viewBox="0 0 12 16" preserveAspectRatio="none" fill="#fff"><path fill-rule="evenodd" d="M0 2.2 L4 2.2 L4.5 0.5 L7.5 0.5 L8 2.2 L12 2.2 L12 4 L0 4 Z M1 5 L11 5 L10.3 16 L1.7 16 Z M3.2 6.5 L3.7 14.5 L4.7 14.5 L4.4 6.5 Z M5.5 6.5 L5.5 14.5 L6.5 14.5 L6.5 6.5 Z M7.6 6.5 L7.3 14.5 L8.3 14.5 L8.8 6.5 Z"/></svg>
<div class="t" style="left:91.50px;width:200px;text-align:center;top:293.21px;font-size:9.28px;color:#444;font-weight:normal;transform:scaleX(0.83);transform-origin:center center;">7695</div>
<div class="t" style="left:122.60px;width:200px;text-align:center;top:293.21px;font-size:9.28px;color:#444;font-weight:normal;transform:scaleX(0.83);transform-origin:center center;">668</div>
<div class="t" style="left:167.65px;width:200px;text-align:center;top:293.21px;font-size:9.28px;color:#444;font-weight:normal;transform:scaleX(0.83);transform-origin:center center;">cai5216</div>
<div class="t" style="left:216.60px;width:200px;text-align:center;top:294.21px;font-size:8.00px;color:#444;font-weight:normal;">蔡凌华</div>
<div class="t" style="left:284.65px;width:200px;text-align:center;top:294.21px;font-size:8.00px;color:#444;font-weight:normal;">稀土</div>
<div class="t" style="left:360.80px;width:200px;text-align:center;top:293.21px;font-size:9.28px;color:#444;font-weight:normal;transform:scaleX(0.83);transform-origin:center center;">26163.77</div>
<div class="t" style="left:412.50px;width:200px;text-align:center;top:293.21px;font-size:9.28px;color:#444;font-weight:normal;transform:scaleX(0.83);transform-origin:center center;">0.00</div>
<div class="t" style="left:459.10px;width:200px;text-align:center;top:293.21px;font-size:9.28px;color:#444;font-weight:normal;transform:scaleX(0.83);transform-origin:center center;">71.6485</div>
<div class="t" style="left:500.05px;width:200px;text-align:center;top:293.21px;font-size:9.28px;color:#444;font-weight:normal;transform:scaleX(0.83);transform-origin:center center;">71.6545</div>
<div class="t" style="left:561.60px;width:200px;text-align:center;top:293.21px;font-size:9.28px;color:#444;font-weight:normal;transform:scaleX(0.83);transform-origin:center center;">2024-09-03 21:04:17</div>
<div class="t" style="left:645.65px;width:200px;text-align:center;top:293.21px;font-size:9.28px;color:#444;font-weight:normal;transform:scaleX(0.83);transform-origin:center center;">2024-09-03 21:12:17</div>
<div class="t" style="left:702.65px;width:200px;text-align:center;top:293.21px;font-size:9.28px;color:#444;font-weight:normal;transform:scaleX(0.83);transform-origin:center center;">480/5</div>
<div class="t" style="left:743.60px;width:200px;text-align:center;top:293.21px;font-size:9.28px;color:#444;font-weight:normal;transform:scaleX(0.83);transform-origin:center center;">27471.96</div>
<div class="a" style="left:163.1px;top:294.61px;width:7.5px;height:7.5px;background:#fff;border:1px solid #8f8f8f;border-radius:1.5px"></div>
<div class="bdg" style="left:410.9px;top:295.91px;width:18.8px;height:9.1px;line-height:9.6px;background:#e74c3c;font-size:5.6px">买涨</div>
<div class="bdg" style="left:878px;top:296.41px;width:24.4px;height:8.9px;line-height:9.3px;background:#e74c3c;font-size:6.2px">已平仓</div>
<div class="btn" style="left:915.8px;top:293.91px;width:47.3px;height:12.2px;background:#18bc9c"></div>
<div class="t" style="left:925.60px;top:294.51px;font-size:6.60px;color:#fff;font-weight:normal;">关闭提示音</div>
<svg class="ic" style="left:919.10px;top:297.01px;width:6.00px;height:6.00px" viewBox="0 0 16 16" preserveAspectRatio="none" fill="#fff"><circle cx="8" cy="8" r="5.5" fill="none" stroke-width="4.6" stroke="#fff"/></svg>
<div class="btn" style="left:974.2px;top:293.91px;width:12.5px;height:12.2px;background:#18bc9c"></div>
<div class="btn" style="left:989px;top:293.91px;width:11.9px;height:12.2px;background:#e74c3c"></div>
<svg class="ic" style="left:977.60px;top:296.81px;width:5.60px;height:5.60px" viewBox="0 0 16 16" preserveAspectRatio="none" fill="#fff"><path d="M11 1 L15 5 L5 15 L0.5 15.5 L1 11 Z"/></svg>
<svg class="ic" style="left:992.60px;top:296.71px;width:4.60px;height:6.00px" viewBox="0 0 12 16" preserveAspectRatio="none" fill="#fff"><path fill-rule="evenodd" d="M0 2.2 L4 2.2 L4.5 0.5 L7.5 0.5 L8 2.2 L12 2.2 L12 4 L0 4 Z M1 5 L11 5 L10.3 16 L1.7 16 Z M3.2 6.5 L3.7 14.5 L4.7 14.5 L4.4 6.5 Z M5.5 6.5 L5.5 14.5 L6.5 14.5 L6.5 6.5 Z M7.6 6.5 L7.3 14.5 L8.3 14.5 L8.8 6.5 Z"/></svg>
<div class="t" style="left:91.50px;width:200px;text-align:center;top:315.14px;font-size:9.28px;color:#444;font-weight:normal;transform:scaleX(0.83);transform-origin:center center;">7694</div>
<div class="t" style="left:122.60px;width:200px;text-align:center;top:315.14px;font-size:9.28px;color:#444;font-weight:normal;transform:scaleX(0.83);transform-origin:center center;">556</div>
<div class="t" style="left:167.65px;width:200px;text-align:center;top:315.14px;font-size:9.28px;color:#444;font-weight:normal;transform:scaleX(0.83);transform-origin:center center;">jj007</div>
<div class="t" style="left:216.60px;width:200px;text-align:center;top:316.14px;font-size:8.00px;color:#444;font-weight:normal;">周家俊</div>
<div class="t" style="left:284.65px;width:200px;text-align:center;top:316.14px;font-size:8.00px;color:#444;font-weight:normal;">稀土</div>
<div class="t" style="left:360.80px;width:200px;text-align:center;top:315.14px;font-size:9.28px;color:#444;font-weight:normal;transform:scaleX(0.83);transform-origin:center center;">5396019.72</div>
<div class="t" style="left:412.50px;width:200px;text-align:center;top:315.14px;font-size:9.28px;color:#444;font-weight:normal;transform:scaleX(0.83);transform-origin:center center;">0.00</div>
<div class="t" style="left:459.10px;width:200px;text-align:center;top:315.14px;font-size:9.28px;color:#444;font-weight:normal;transform:scaleX(0.83);transform-origin:center center;">71.6485</div>
<div class="t" style="left:500.05px;width:200px;text-align:center;top:315.14px;font-size:9.28px;color:#444;font-weight:normal;transform:scaleX(0.83);transform-origin:center center;">71.6575</div>
<div class="t" style="left:561.60px;width:200px;text-align:center;top:315.14px;font-size:9.28px;color:#444;font-weight:normal;transform:scaleX(0.83);transform-origin:center center;">2024-09-03 21:04:16</div>
<div class="t" style="left:645.65px;width:200px;text-align:center;top:315.14px;font-size:9.28px;color:#444;font-weight:normal;transform:scaleX(0.83);transform-origin:center center;">2024-09-03 21:12:16</div>
<div class="t" style="left:702.65px;width:200px;text-align:center;top:315.14px;font-size:9.28px;color:#444;font-weight:normal;transform:scaleX(0.83);transform-origin:center center;">480/5</div>
<div class="t" style="left:743.60px;width:200px;text-align:center;top:315.14px;font-size:9.28px;color:#444;font-weight:normal;transform:scaleX(0.83);transform-origin:center center;">5665820.5</div>
<div class="a" style="left:163.1px;top:316.54px;width:7.5px;height:7.5px;background:#fff;border:1px solid #8f8f8f;border-radius:1.5px"></div>
<div class="bdg" style="left:410.9px;top:317.84px;width:18.8px;height:9.1px;line-height:9.6px;background:#e74c3c;font-size:5.6px">买涨</div>
<div class="bdg" style="left:878px;top:318.34px;width:24.4px;height:8.9px;line-height:9.3px;background:#e74c3c;font-size:6.2px">已平仓</div>
<div class="btn" style="left:915.8px;top:315.84px;width:47.3px;height:12.2px;background:#18bc9c"></div>
<div class="t" style="left:925.60px;top:316.44px;font-size:6.60px;color:#fff;font-weight:normal;">关闭提示音</div>
<svg class="ic" style="left:919.10px;top:318.94px;width:6.00px;height:6.00px" viewBox="0 0 16 16" preserveAspectRatio="none" fill="#fff"><circle cx="8" cy="8" r="5.5" fill="none" stroke-width="4.6" stroke="#fff"/></svg>
<div class="btn" style="left:974.2px;top:315.84px;width:12.5px;height:12.2px;background:#18bc9c"></div>
<div class="btn" style="left:989px;top:315.84px;width:11.9px;height:12.2px;background:#e74c3c"></div>
<svg class="ic" style="left:977.60px;top:318.75px;width:5.60px;height:5.60px" viewBox="0 0 16 16" preserveAspectRatio="none" fill="#fff"><path d="M11 1 L15 5 L5 15 L0.5 15.5 L1 11 Z"/></svg>
<svg class="ic" style="left:992.60px;top:318.64px;width:4.60px;height:6.00px" viewBox="0 0 12 16" preserveAspectRatio="none" fill="#fff"><path fill-rule="evenodd" d="M0 2.2 L4 2.2 L4.5 0.5 L7.5 0.5 L8 2.2 L12 2.2 L12 4 L0 4 Z M1 5 L11 5 L10.3 16 L1.7 16 Z M3.2 6.5 L3.7 14.5 L4.7 14.5 L4.4 6.5 Z M5.5 6.5 L5.5 14.5 L6.5 14.5 L6.5 6.5 Z M7.6 6.5 L7.3 14.5 L8.3 14.5 L8.8 6.5 Z"/></svg>
<div class="t" style="left:91.50px;width:200px;text-align:center;top:337.07px;font-size:9.28px;color:#444;font-weight:normal;transform:scaleX(0.83);transform-origin:center center;">7693</div>
<div class="t" style="left:122.60px;width:200px;text-align:center;top:337.07px;font-size:9.28px;color:#444;font-weight:normal;transform:scaleX(0.83);transform-origin:center center;">600</div>
<div class="t" style="left:167.65px;width:200px;text-align:center;top:337.07px;font-size:9.28px;color:#444;font-weight:normal;transform:scaleX(0.83);transform-origin:center center;">zy999</div>
<div class="t" style="left:216.60px;width:200px;text-align:center;top:338.07px;font-size:8.00px;color:#444;font-weight:normal;">周宇</div>
<div class="t" style="left:284.65px;width:200px;text-align:center;top:338.07px;font-size:8.00px;color:#444;font-weight:normal;">稀土</div>
<div class="t" style="left:360.80px;width:200px;text-align:center;top:337.07px;font-size:9.28px;color:#444;font-weight:normal;transform:scaleX(0.83);transform-origin:center center;">1469029.89</div>
<div class="t" style="left:412.50px;width:200px;text-align:center;top:337.07px;font-size:9.28px;color:#444;font-weight:normal;transform:scaleX(0.83);transform-origin:center center;">0.00</div>
<div class="t" style="left:459.10px;width:200px;text-align:center;top:337.07px;font-size:9.28px;color:#444;font-weight:normal;transform:scaleX(0.83);transform-origin:center center;">71.6813</div>
<div class="t" style="left:500.05px;width:200px;text-align:center;top:337.07px;font-size:9.28px;color:#444;font-weight:normal;transform:scaleX(0.83);transform-origin:center center;">71.6853</div>
<div class="t" style="left:561.60px;width:200px;text-align:center;top:337.07px;font-size:9.28px;color:#444;font-weight:normal;transform:scaleX(0.83);transform-origin:center center;">2024-09-03 21:04:01</div>
<div class="t" style="left:645.65px;width:200px;text-align:center;top:337.07px;font-size:9.28px;color:#444;font-weight:normal;transform:scaleX(0.83);transform-origin:center center;">2024-09-03 21:12:01</div>
<div class="t" style="left:702.65px;width:200px;text-align:center;top:337.07px;font-size:9.28px;color:#444;font-weight:normal;transform:scaleX(0.83);transform-origin:center center;">480/5</div>
<div class="t" style="left:743.60px;width:200px;text-align:center;top:337.07px;font-size:9.28px;color:#444;font-weight:normal;transform:scaleX(0.83);transform-origin:center center;">1542481.38</div>
<div class="a" style="left:163.1px;top:338.47px;width:7.5px;height:7.5px;background:#fff;border:1px solid #8f8f8f;border-radius:1.5px"></div>
<div class="bdg" style="left:410.9px;top:339.77px;width:18.8px;height:9.1px;line-height:9.6px;background:#e74c3c;font-size:5.6px">买涨</div>
<div class="bdg" style="left:878px;top:340.27px;width:24.4px;height:8.9px;line-height:9.3px;background:#e74c3c;font-size:6.2px">已平仓</div>
<div class="btn" style="left:915.8px;top:337.77px;width:47.3px;height:12.2px;background:#18bc9c"></div>
<div class="t" style="left:925.60px;top:338.38px;font-size:6.60px;color:#fff;font-weight:normal;">关闭提示音</div>
<svg class="ic" style="left:919.10px;top:340.88px;width:6.00px;height:6.00px" viewBox="0 0 16 16" preserveAspectRatio="none" fill="#fff"><circle cx="8" cy="8" r="5.5" fill="none" stroke-width="4.6" stroke="#fff"/></svg>
<div class="btn" style="left:974.2px;top:337.77px;width:12.5px;height:12.2px;background:#18bc9c"></div>
<div class="btn" style="left:989px;top:337.77px;width:11.9px;height:12.2px;background:#e74c3c"></div>
<svg class="ic" style="left:977.60px;top:340.68px;width:5.60px;height:5.60px" viewBox="0 0 16 16" preserveAspectRatio="none" fill="#fff"><path d="M11 1 L15 5 L5 15 L0.5 15.5 L1 11 Z"/></svg>
<svg class="ic" style="left:992.60px;top:340.57px;width:4.60px;height:6.00px" viewBox="0 0 12 16" preserveAspectRatio="none" fill="#fff"><path fill-rule="evenodd" d="M0 2.2 L4 2.2 L4.5 0.5 L7.5 0.5 L8 2.2 L12 2.2 L12 4 L0 4 Z M1 5 L11 5 L10.3 16 L1.7 16 Z M3.2 6.5 L3.7 14.5 L4.7 14.5 L4.4 6.5 Z M5.5 6.5 L5.5 14.5 L6.5 14.5 L6.5 6.5 Z M7.6 6.5 L7.3 14.5 L8.3 14.5 L8.8 6.5 Z"/></svg>
<div class="t" style="left:91.50px;width:200px;text-align:center;top:359.00px;font-size:9.28px;color:#444;font-weight:normal;transform:scaleX(0.83);transform-origin:center center;">7692</div>
<div class="t" style="left:122.60px;width:200px;text-align:center;top:359.00px;font-size:9.28px;color:#444;font-weight:normal;transform:scaleX(0.83);transform-origin:center center;">595</div>
<div class="t" style="left:167.65px;width:200px;text-align:center;top:359.00px;font-size:9.28px;color:#444;font-weight:normal;transform:scaleX(0.83);transform-origin:center center;">Fushanxiang</div>
<div class="t" style="left:216.60px;width:200px;text-align:center;top:360.00px;font-size:8.00px;color:#444;font-weight:normal;">付善香</div>
<div class="t" style="left:284.65px;width:200px;text-align:center;top:360.00px;font-size:8.00px;color:#444;font-weight:normal;">稀土</div>
<div class="t" style="left:360.80px;width:200px;text-align:center;top:359.00px;font-size:9.28px;color:#444;font-weight:normal;transform:scaleX(0.83);transform-origin:center center;">1218936.27</div>
<div class="t" style="left:412.50px;width:200px;text-align:center;top:359.00px;font-size:9.28px;color:#444;font-weight:normal;transform:scaleX(0.83);transform-origin:center center;">0.00</div>
<div class="t" style="left:459.10px;width:200px;text-align:center;top:359.00px;font-size:9.28px;color:#444;font-weight:normal;transform:scaleX(0.83);transform-origin:center center;">71.6899</div>
<div class="t" style="left:500.05px;width:200px;text-align:center;top:359.00px;font-size:9.28px;color:#444;font-weight:normal;transform:scaleX(0.83);transform-origin:center center;">71.6969</div>
<div class="t" style="left:561.60px;width:200px;text-align:center;top:359.00px;font-size:9.28px;color:#444;font-weight:normal;transform:scaleX(0.83);transform-origin:center center;">2024-09-03 21:03:50</div>
<div class="t" style="left:645.65px;width:200px;text-align:center;top:359.00px;font-size:9.28px;color:#444;font-weight:normal;transform:scaleX(0.83);transform-origin:center center;">2024-09-03 21:11:50</div>
<div class="t" style="left:702.65px;width:200px;text-align:center;top:359.00px;font-size:9.28px;color:#444;font-weight:normal;transform:scaleX(0.83);transform-origin:center center;">480/5</div>
<div class="t" style="left:743.60px;width:200px;text-align:center;top:359.00px;font-size:9.28px;color:#444;font-weight:normal;transform:scaleX(0.83);transform-origin:center center;">1279883.12</div>
<div class="a" style="left:163.1px;top:360.40px;width:7.5px;height:7.5px;background:#fff;border:1px solid #8f8f8f;border-radius:1.5px"></div>
<div class="bdg" style="left:410.9px;top:361.70px;width:18.8px;height:9.1px;line-height:9.6px;background:#e74c3c;font-size:5.6px">买涨</div>
<div class="bdg" style="left:878px;top:362.20px;width:24.4px;height:8.9px;line-height:9.3px;background:#e74c3c;font-size:6.2px">已平仓</div>
<div class="btn" style="left:915.8px;top:359.70px;width:47.3px;height:12.2px;background:#18bc9c"></div>
<div class="t" style="left:925.60px;top:360.31px;font-size:6.60px;color:#fff;font-weight:normal;">关闭提示音</div>
<svg class="ic" style="left:919.10px;top:362.81px;width:6.00px;height:6.00px" viewBox="0 0 16 16" preserveAspectRatio="none" fill="#fff"><circle cx="8" cy="8" r="5.5" fill="none" stroke-width="4.6" stroke="#fff"/></svg>
<div class="btn" style="left:974.2px;top:359.70px;width:12.5px;height:12.2px;background:#18bc9c"></div>
<div class="btn" style="left:989px;top:359.70px;width:11.9px;height:12.2px;background:#e74c3c"></div>
<svg class="ic" style="left:977.60px;top:362.61px;width:5.60px;height:5.60px" viewBox="0 0 16 16" preserveAspectRatio="none" fill="#fff"><path d="M11 1 L15 5 L5 15 L0.5 15.5 L1 11 Z"/></svg>
<svg class="ic" style="left:992.60px;top:362.50px;width:4.60px;height:6.00px" viewBox="0 0 12 16" preserveAspectRatio="none" fill="#fff"><path fill-rule="evenodd" d="M0 2.2 L4 2.2 L4.5 0.5 L7.5 0.5 L8 2.2 L12 2.2 L12 4 L0 4 Z M1 5 L11 5 L10.3 16 L1.7 16 Z M3.2 6.5 L3.7 14.5 L4.7 14.5 L4.4 6.5 Z M5.5 6.5 L5.5 14.5 L6.5 14.5 L6.5 6.5 Z M7.6 6.5 L7.3 14.5 L8.3 14.5 L8.8 6.5 Z"/></svg>
<div class="t" style="left:91.50px;width:200px;text-align:center;top:380.94px;font-size:9.28px;color:#444;font-weight:normal;transform:scaleX(0.83);transform-origin:center center;">7691</div>
<div class="t" style="left:122.60px;width:200px;text-align:center;top:380.94px;font-size:9.28px;color:#444;font-weight:normal;transform:scaleX(0.83);transform-origin:center center;">676</div>
<div class="t" style="left:167.65px;width:200px;text-align:center;top:380.94px;font-size:9.28px;color:#444;font-weight:normal;transform:scaleX(0.83);transform-origin:center center;">dong520he</div>
<div class="t" style="left:216.60px;width:200px;text-align:center;top:381.94px;font-size:8.00px;color:#444;font-weight:normal;">何天宇</div>
<div class="t" style="left:284.65px;width:200px;text-align:center;top:381.94px;font-size:8.00px;color:#444;font-weight:normal;">稀土</div>
<div class="t" style="left:360.80px;width:200px;text-align:center;top:380.94px;font-size:9.28px;color:#444;font-weight:normal;transform:scaleX(0.83);transform-origin:center center;">164642.56</div>
<div class="t" style="left:412.50px;width:200px;text-align:center;top:380.94px;font-size:9.28px;color:#444;font-weight:normal;transform:scaleX(0.83);transform-origin:center center;">0.00</div>
<div class="t" style="left:459.10px;width:200px;text-align:center;top:380.94px;font-size:9.28px;color:#444;font-weight:normal;transform:scaleX(0.83);transform-origin:center center;">71.6697</div>
<div class="t" style="left:500.05px;width:200px;text-align:center;top:380.94px;font-size:9.28px;color:#444;font-weight:normal;transform:scaleX(0.83);transform-origin:center center;">71.6767</div>
<div class="t" style="left:561.60px;width:200px;text-align:center;top:380.94px;font-size:9.28px;color:#444;font-weight:normal;transform:scaleX(0.83);transform-origin:center center;">2024-09-03 21:03:44</div>
<div class="t" style="left:645.65px;width:200px;text-align:center;top:380.94px;font-size:9.28px;color:#444;font-weight:normal;transform:scaleX(0.83);transform-origin:center center;">2024-09-03 21:11:44</div>
<div class="t" style="left:702.65px;width:200px;text-align:center;top:380.94px;font-size:9.28px;color:#444;font-weight:normal;transform:scaleX(0.83);transform-origin:center center;">480/5</div>
<div class="t" style="left:743.60px;width:200px;text-align:center;top:380.94px;font-size:9.28px;color:#444;font-weight:normal;transform:scaleX(0.83);transform-origin:center center;">172874.69</div>
<div class="a" style="left:163.1px;top:382.33px;width:7.5px;height:7.5px;background:#fff;border:1px solid #8f8f8f;border-radius:1.5px"></div>
<div class="bdg" style="left:410.9px;top:383.63px;width:18.8px;height:9.1px;line-height:9.6px;background:#e74c3c;font-size:5.6px">买涨</div>
<div class="bdg" style="left:878px;top:384.13px;width:24.4px;height:8.9px;line-height:9.3px;background:#e74c3c;font-size:6.2px">已平仓</div>
<div class="btn" style="left:915.8px;top:381.63px;width:47.3px;height:12.2px;background:#18bc9c"></div>
<div class="t" style="left:925.60px;top:382.24px;font-size:6.60px;color:#fff;font-weight:normal;">关闭提示音</div>
<svg class="ic" style="left:919.10px;top:384.74px;width:6.00px;height:6.00px" viewBox="0 0 16 16" preserveAspectRatio="none" fill="#fff"><circle cx="8" cy="8" r="5.5" fill="none" stroke-width="4.6" stroke="#fff"/></svg>
<div class="btn" style="left:974.2px;top:381.63px;width:12.5px;height:12.2px;background:#18bc9c"></div>
<div class="btn" style="left:989px;top:381.63px;width:11.9px;height:12.2px;background:#e74c3c"></div>
<svg class="ic" style="left:977.60px;top:384.54px;width:5.60px;height:5.60px" viewBox="0 0 16 16" preserveAspectRatio="none" fill="#fff"><path d="M11 1 L15 5 L5 15 L0.5 15.5 L1 11 Z"/></svg>
<svg class="ic" style="left:992.60px;top:384.44px;width:4.60px;height:6.00px" viewBox="0 0 12 16" preserveAspectRatio="none" fill="#fff"><path fill-rule="evenodd" d="M0 2.2 L4 2.2 L4.5 0.5 L7.5 0.5 L8 2.2 L12 2.2 L12 4 L0 4 Z M1 5 L11 5 L10.3 16 L1.7 16 Z M3.2 6.5 L3.7 14.5 L4.7 14.5 L4.4 6.5 Z M5.5 6.5 L5.5 14.5 L6.5 14.5 L6.5 6.5 Z M7.6 6.5 L7.3 14.5 L8.3 14.5 L8.8 6.5 Z"/></svg>
<div class="a" style="left:163.1px;top:162px;width:7.5px;height:7.5px;background:#fff;border:1px solid #8f8f8f;border-radius:1.5px"></div>
<div class="a" style="left:875.9px;top:184px;width:28.6px;height:9.8px;background:#fff;border:1px solid #9a9a9a;border-radius:1.5px"></div>
<div class="t" style="left:877.80px;top:184.20px;font-size:7.20px;color:#555;font-weight:normal;">默认</div>
<svg class="ic" style="left:896.8px;top:187.6px;width:5.6px;height:3.8px" viewBox="0 0 10 6"><path d="M1 1 L5 5 L9 1" fill="none" stroke="#333" stroke-width="1.6"/></svg>
<div class="a" style="left:875.8px;top:193.8px;width:29.4px;height:33.8px;background:#fff;border:1px solid #b8b8b8;box-shadow:1px 1.5px 2.5px rgba(0,0,0,0.2)"></div>
<div class="a" style="left:876.5px;top:195px;width:28.2px;height:10.3px;background:#2b63d3"></div>
<div class="t" style="left:878.00px;top:195.20px;font-size:7.50px;color:#fff;font-weight:normal;">默认</div>
<div class="t" style="left:878.00px;top:206.20px;font-size:7.50px;color:#333;font-weight:normal;">赢</div>
<div class="t" style="left:878.00px;top:217.00px;font-size:7.50px;color:#333;font-weight:normal;">亏</div>
<div class="t" style="left:156.40px;top:408.90px;font-size:7.50px;color:#333;font-weight:normal;">显示第 1 到第 10 条记录，总共 7695 条记录 每页显示</div>
<div class="btn" style="left:345px;top:406.2px;width:29.6px;height:18.1px;line-height:18px;background:#f4f4f4;border:1px solid #e3e3e3;color:#333;font-size:7px">10 ▴</div>
<div class="t" style="left:376.80px;top:408.90px;font-size:7.50px;color:#333;font-weight:normal;">条记录</div>
<div class="a" style="left:786.2px;top:404.2px;width:220.2px;height:19.5px;background:#fafafa;border:1px solid #e9e9e9;border-radius:2.5px"></div>
<div class="t" style="left:705.85px;width:200px;text-align:center;top:409.00px;font-size:8.00px;color:#666;font-weight:normal;">上一页</div>
<div class="a" style="left:823.8px;top:404.2px;width:1px;height:19.5px;background:#ececec"></div>
<div class="a" style="left:824.3px;top:404.2px;width:19.6px;height:19.5px;background:#2c3e50"></div>
<div class="t" style="left:734.10px;width:200px;text-align:center;top:408.00px;font-size:9.28px;color:#fff;font-weight:normal;transform:scaleX(0.83);transform-origin:center center;">1</div>
<div class="a" style="left:843.4px;top:404.2px;width:1px;height:19.5px;background:#ececec"></div>
<div class="t" style="left:753.30px;width:200px;text-align:center;top:408.00px;font-size:9.28px;color:#666;font-weight:normal;transform:scaleX(0.83);transform-origin:center center;">2</div>
<div class="a" style="left:862.2px;top:404.2px;width:1px;height:19.5px;background:#ececec"></div>
<div class="t" style="left:772.20px;width:200px;text-align:center;top:408.00px;font-size:9.28px;color:#666;font-weight:normal;transform:scaleX(0.83);transform-origin:center center;">3</div>
<div class="a" style="left:881.2px;top:404.2px;width:1px;height:19.5px;background:#ececec"></div>
<div class="t" style="left:791.25px;width:200px;text-align:center;top:408.00px;font-size:9.28px;color:#666;font-weight:normal;transform:scaleX(0.83);transform-origin:center center;">4</div>
<div class="a" style="left:900.3px;top:404.2px;width:1px;height:19.5px;background:#ececec"></div>
<div class="t" style="left:810.20px;width:200px;text-align:center;top:408.00px;font-size:9.28px;color:#666;font-weight:normal;transform:scaleX(0.83);transform-origin:center center;">5</div>
<div class="a" style="left:919.1px;top:404.2px;width:1px;height:19.5px;background:#ececec"></div>
<div class="a" style="left:919.6px;top:405.5px;width:21.0px;height:17.1px;background:#fff"></div>
<div class="t" style="left:830.10px;width:200px;text-align:center;top:408.00px;font-size:9.28px;color:#ccc;font-weight:normal;transform:scaleX(0.83);transform-origin:center center;">...</div>
<div class="a" style="left:940.1px;top:404.2px;width:1px;height:19.5px;background:#ececec"></div>
<div class="t" style="left:854.65px;width:200px;text-align:center;top:408.00px;font-size:9.28px;color:#666;font-weight:normal;transform:scaleX(0.83);transform-origin:center center;">770</div>
<div class="a" style="left:968.2px;top:404.2px;width:1px;height:19.5px;background:#ececec"></div>
<div class="t" style="left:888.15px;width:200px;text-align:center;top:409.00px;font-size:8.00px;color:#666;font-weight:normal;">下一页</div>
</body></html>
